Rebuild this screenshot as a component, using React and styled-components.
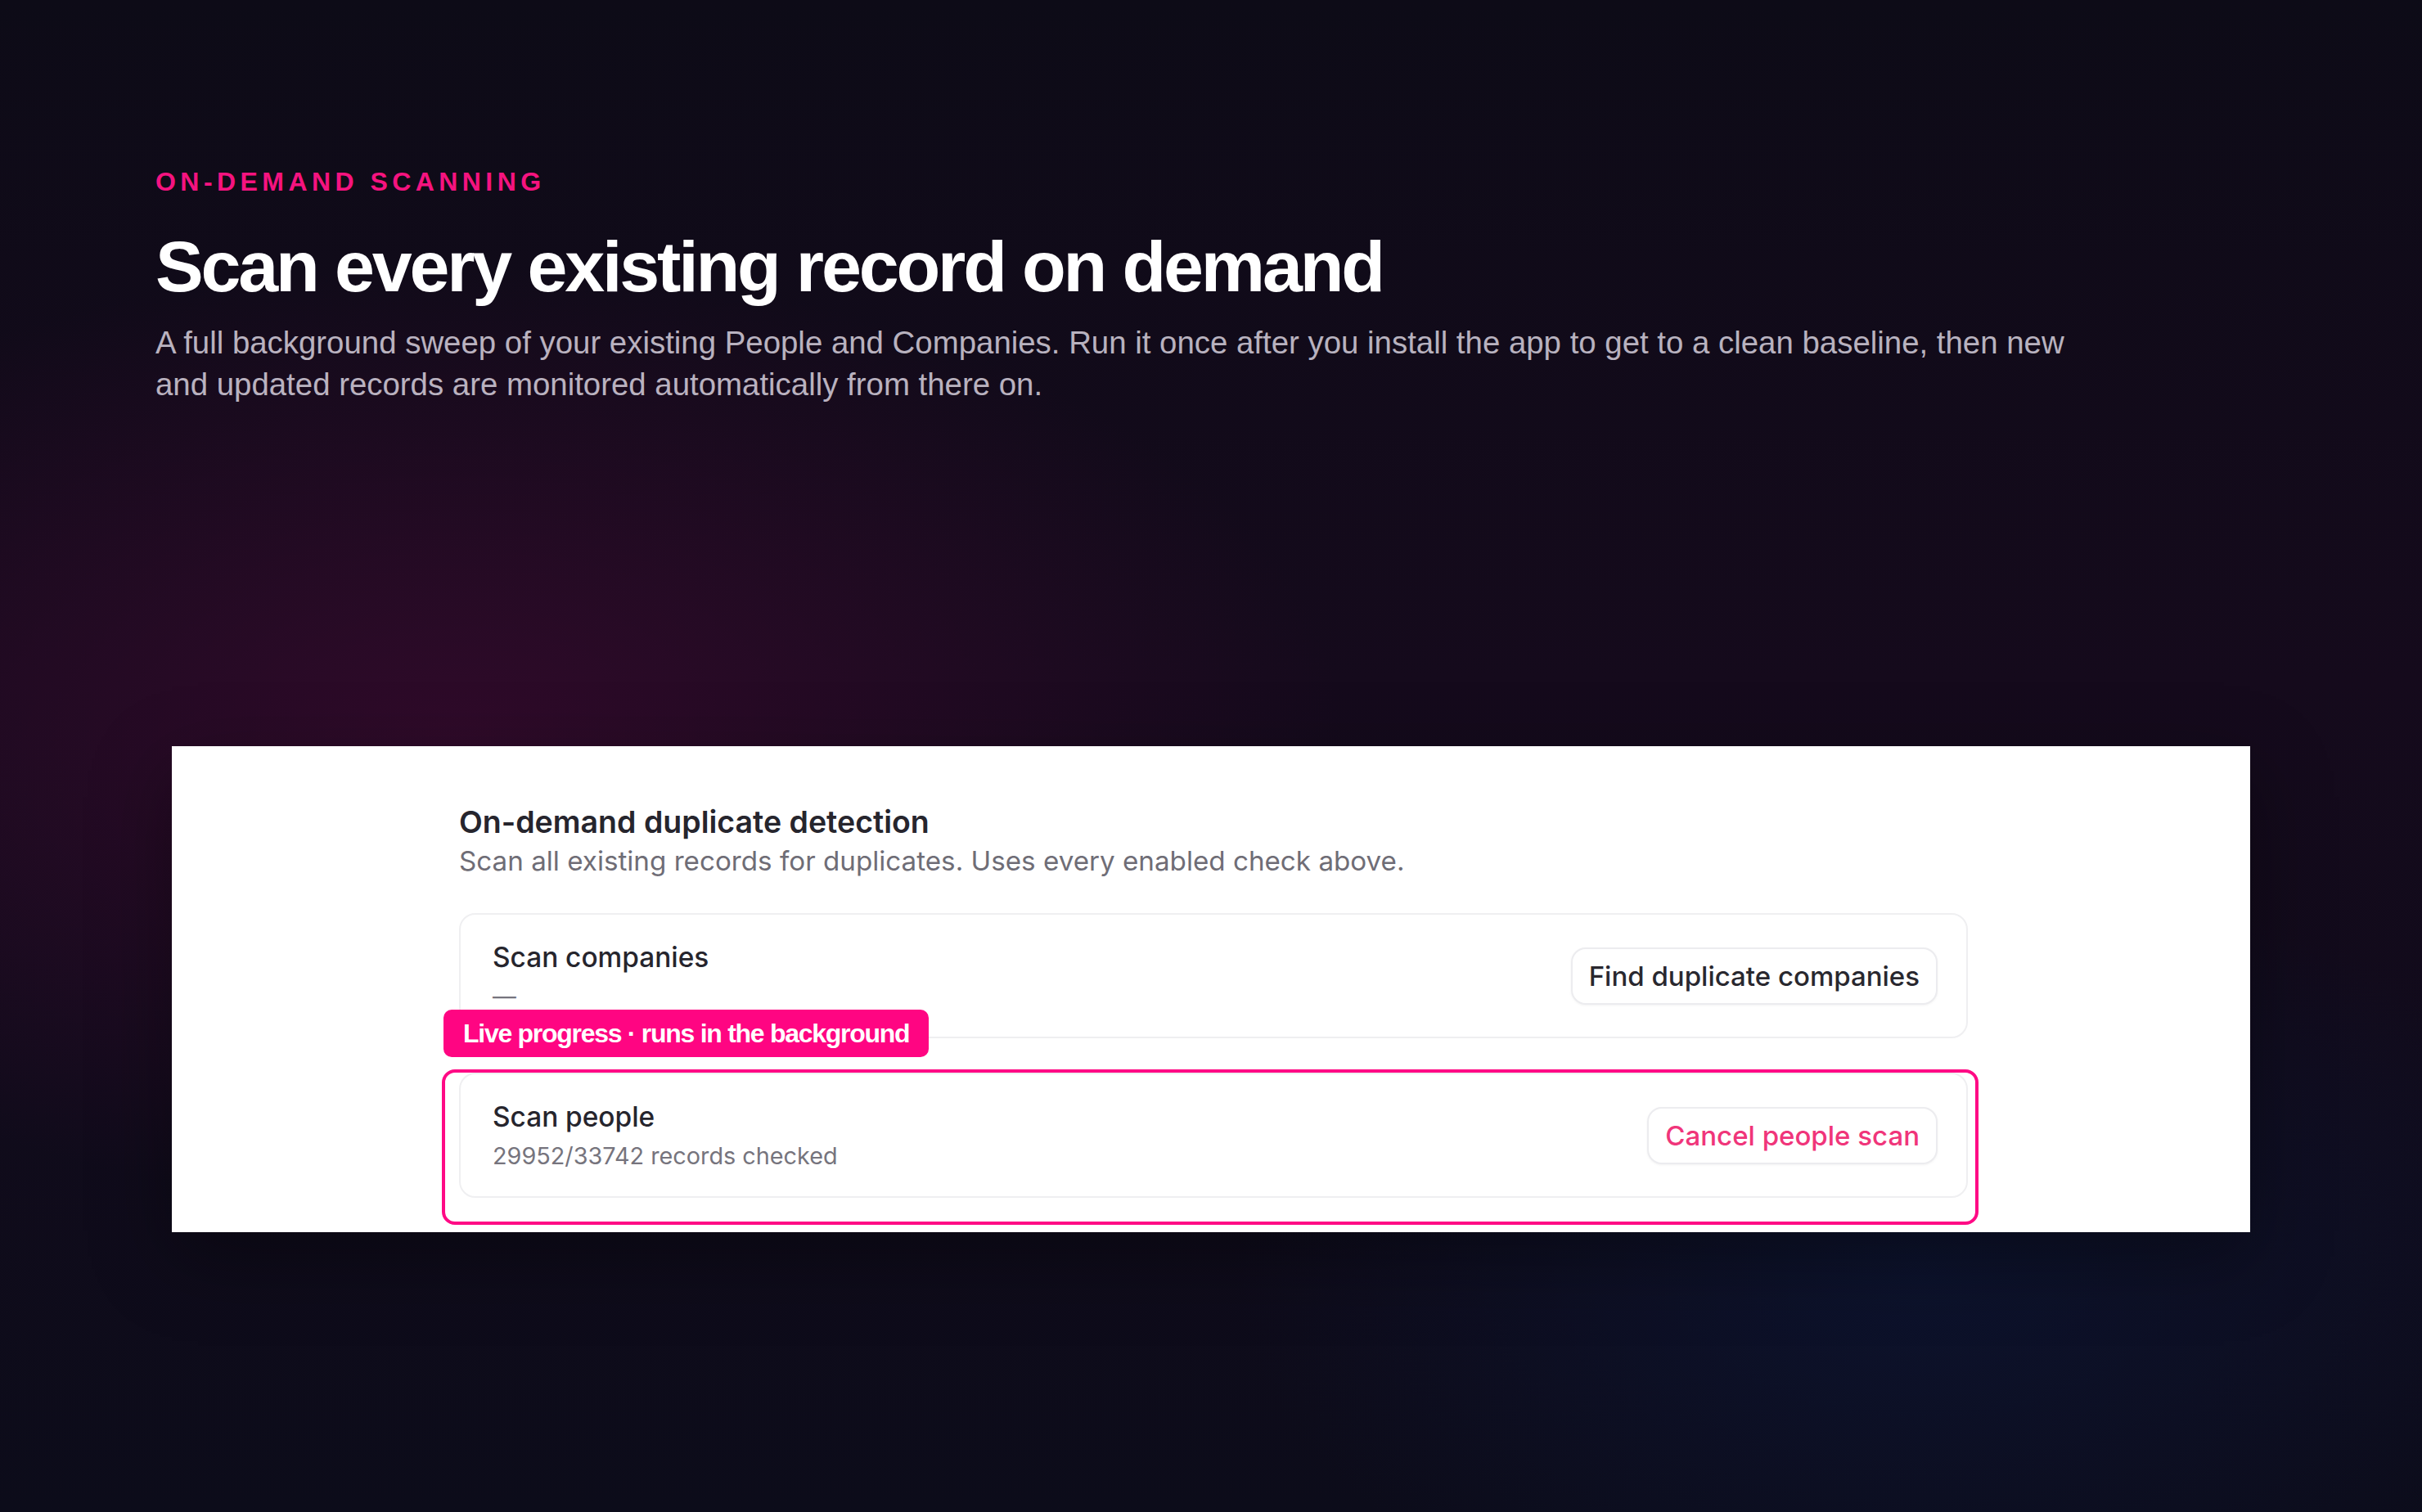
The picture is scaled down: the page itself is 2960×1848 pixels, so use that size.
import React from "react";
import styled, { createGlobalStyle } from "styled-components";

const GlobalStyle = createGlobalStyle`
  html, body {
    margin: 0;
    padding: 0;
    background: #0e0c18;
  }
  * { box-sizing: border-box; }
`;

const Page = styled.div`
  width: 2960px;
  height: 1848px;
  overflow: hidden;
  padding: 206px 0 0 190px;
  background:
    radial-gradient(ellipse 1500px 800px at 560px 900px, rgba(56, 10, 46, 0.75), rgba(56, 10, 46, 0) 72%),
    radial-gradient(ellipse 1200px 700px at 2350px 1550px, rgba(12, 20, 48, 0.85), rgba(12, 20, 48, 0) 70%),
    linear-gradient(180deg, #0d0b17 0%, #150a1c 45%, #0c0c1a 100%);
  font-family: "Liberation Sans", Arial, sans-serif;
`;

const Hero = styled.header`
  display: flex;
  flex-direction: column;
`;

const Eyebrow = styled.div`
  font-size: 32px;
  line-height: 32px;
  font-weight: 700;
  letter-spacing: 0.17em;
  color: #f5137f;
  text-transform: uppercase;
`;

const Title = styled.h1`
  margin: 39px 0 0;
  font-size: 88px;
  line-height: 97px;
  font-weight: 700;
  letter-spacing: -0.036em;
  color: #ffffff;
`;

const Lead = styled.p`
  margin: 19px 0 0;
  max-width: 2360px;
  font-size: 38.4px;
  line-height: 51px;
  letter-spacing: 0;
  color: rgba(232, 226, 238, 0.78);
`;

const Panel = styled.section`
  margin: 417px 0 0 20px;
  width: 2540px;
  height: 594px;
  background: #ffffff;
  box-shadow: 0 30px 90px rgba(0, 0, 0, 0.35);
  font-family: Inter, "Noto Sans", sans-serif;
  overflow: hidden;
`;

const Column = styled.div`
  width: 1844px;
  margin-left: 351px;
  padding-top: 69px;
  display: flex;
  flex-direction: column;
`;

const SectionTitle = styled.h2`
  margin: 0;
  font-size: 37.5px;
  line-height: 48px;
  font-weight: 600;
  letter-spacing: 0;
  color: #26252d;
`;

const SectionHint = styled.p`
  margin: 1px 0 0;
  font-size: 33.2px;
  line-height: 45px;
  color: #6f6d76;
`;

const CardList = styled.div`
  margin-top: 41px;
  display: flex;
  flex-direction: column;
  gap: 42px;
`;

const Card = styled.div`
  display: flex;
  align-items: center;
  justify-content: space-between;
  min-height: 152px;
  padding: 30px 35px 30px 39px;
  border: 2px solid #efeff1;
  border-radius: 20px;
  background: #ffffff;
`;

const CardText = styled.div`
  display: flex;
  flex-direction: column;
  gap: 5px;
`;

const CardTitle = styled.div`
  font-size: 33.4px;
  line-height: 45px;
  font-weight: 500;
  color: #26252d;
`;

const CardStatus = styled.div`
  font-size: 28.8px;
  line-height: 39px;
  color: #76747d;
`;

const ActionButton = styled.button`
  height: 70px;
  padding: 0 20px;
  border: 2px solid #ececef;
  border-radius: 18px;
  background: #ffffff;
  box-shadow: 0 1px 3px rgba(0, 0, 0, 0.05);
  font-family: Inter, "Noto Sans", sans-serif;
  font-size: 33px;
  font-weight: 500;
  color: ${(p) => (p.$danger ? "#f0357a" : "#29282f")};
  cursor: pointer;
`;

const Highlighted = styled.div`
  position: relative;
`;

const HighlightRing = styled.div`
  position: absolute;
  top: -4px;
  left: -21px;
  right: -13px;
  bottom: -33px;
  border: 4px solid #ff0a85;
  border-radius: 16px;
  pointer-events: none;
`;

const HighlightBadge = styled.div`
  position: absolute;
  top: -77px;
  left: -19px;
  height: 58px;
  display: flex;
  align-items: center;
  padding: 0 24px;
  border-radius: 10px;
  background: #ff0582;
  font-family: "Liberation Sans", Arial, sans-serif;
  font-size: 32px;
  font-weight: 700;
  letter-spacing: -0.04em;
  color: #ffffff;
  white-space: nowrap;
`;

export default function App() {
  return (
    <>
      <GlobalStyle />
      <Page>
        <Hero>
          <Eyebrow>On-demand scanning</Eyebrow>
          <Title>Scan every existing record on demand</Title>
          <Lead>
            A full background sweep of your existing People and Companies. Run it once after you
            install the app to get to a clean baseline, then new and updated records are monitored
            automatically from there on.
          </Lead>
        </Hero>
        <Panel>
          <Column>
            <SectionTitle>On-demand duplicate detection</SectionTitle>
            <SectionHint>Scan all existing records for duplicates. Uses every enabled check above.</SectionHint>
            <CardList>
              <Card>
                <CardText>
                  <CardTitle>Scan companies</CardTitle>
                  <CardStatus>—</CardStatus>
                </CardText>
                <ActionButton>Find duplicate companies</ActionButton>
              </Card>
              <Highlighted>
                <Card>
                  <CardText>
                    <CardTitle>Scan people</CardTitle>
                    <CardStatus>29952/33742 records checked</CardStatus>
                  </CardText>
                  <ActionButton $danger>Cancel people scan</ActionButton>
                </Card>
                <HighlightRing />
                <HighlightBadge>Live progress · runs in the background</HighlightBadge>
              </Highlighted>
            </CardList>
          </Column>
        </Panel>
      </Page>
    </>
  );
}
